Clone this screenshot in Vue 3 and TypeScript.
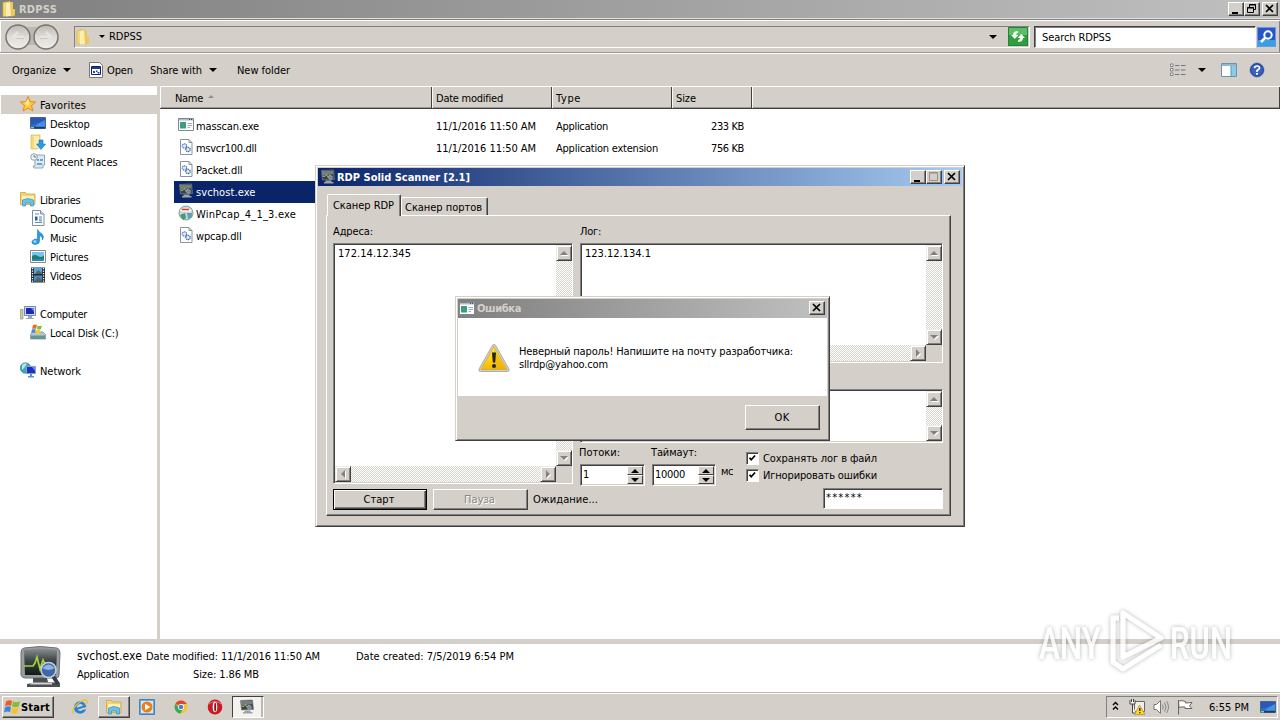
<script setup lang="ts">
interface Place { label: string; icon: string; level: number; w: number; active?: boolean }
interface FileRow { name: string; icon: string; w: number; selected?: boolean; date?: string; type?: string; typeW?: number; size?: string }

// Spreads the letters of a label so that it takes the given width in pixels.
const vFit = {
  mounted(el: HTMLElement, binding: { value: number }) {
    const range = document.createRange()
    range.selectNodeContents(el)
    const natural = range.getBoundingClientRect().width
    const count = (el.textContent || '').trim().length
    if (count > 0) el.style.letterSpacing = `${(binding.value - natural) / count}px`
  },
}

const icons: Record<string, string> = {
  folder: '<path d="M2 1.500 9 .5v14l-7 1z" fill="#f3d878" stroke="#d8b24c" stroke-width=".6"/><path d="M5 2.500l5-1.500v14l-5 .5z" fill="#fbeeb0"/><path d="M9 1h3v7h2v6.500l-4 1z" fill="#e9c75c"/>',
  open: '<path d="M1.500.5h10l3 3v12h-13z" fill="#fff" stroke="#777"/><path d="M3.500 4.500h9v8h-9z" fill="#fff" stroke="#0a246a"/><path d="M4 5h8v2H4z" fill="#1a3c9a"/><path d="M5 9h2v2H5zM8 8.500h1.500v1.500H8zM9.500 10h2v1.500h-2z" fill="#26409c"/>',
  star: '<path d="M8 .5 10.200 5.600 15.700 6 11.500 9.600 12.900 15 8 12 3.100 15 4.500 9.600.3 6l5.500-.4z" fill="#ffc93a" stroke="#e88a1c" stroke-width="1"/><path d="M8 3 9.300 7 8 10 5 7z" fill="#ffef9c"/>',
  desktop: '<path d="M.5 2.500h15v11H.5z" fill="#2c6fce" stroke="#4a6688"/><path d="M1 3h14v3L1 10z" fill="#2a58b8"/><path d="M7 9.500 15 5v6.500H6z" fill="#4690e4"/><path d="M1 12h14v1.500H1z" fill="#263a55"/><path d="M1 12h3v1.500H1z" fill="#7bd47b"/>',
  downloads: '<path d="M1 1h9v12l-3 2H1z" fill="#f4da80" stroke="#dcb75a" stroke-width=".7"/><path d="M4 2h5v12H4z" fill="#fbedb0"/><path d="M9 6h4v4h2.500L11 15.500 6.500 10H9z" fill="#2c9ade" stroke="#1b74bd" stroke-width=".6"/>',
  recent: '<path d="M5 2h9.500v10h-1.500v3H4l-1-2h2z" fill="#dfe9f1" stroke="#7c93a8" stroke-width=".8"/><circle cx="4" cy="4" r="3.300" fill="#eef4f8" stroke="#8a9aa8" stroke-width=".9"/><path d="M4 2v2h2" stroke="#456" fill="none" stroke-width=".8"/><path d="M7 6h2v2H7zM10 6h3v2h-3zM7 10h5v2H7z" fill="#6ea2c8"/>',
  libraries: '<path d="M.5 3V1.500h5l1 1.500H15v10.500H.5z" fill="#f1d674" stroke="#c9a645" stroke-width=".8"/><path d="M2 5h12v4H2z" fill="#fcf0b5"/><path d="M2.500 15V9Q8 6 13.500 9v6h-3v-3h-5v3z" fill="#6cc0e8" stroke="#3d8fc0" stroke-width=".7"/>',
  doc: '<path d="M2.500.5h8l3.500 3.500v11.500H2.500z" fill="#fff" stroke="#7b8fa5"/><path d="M10.500.5V4H14" fill="#d5e2ef" stroke="#7b8fa5"/><path d="M5 4h4M5 12.500h7" stroke="#6d8cb0"/><path d="M5 6.500h2.500v4H5z" fill="#2b5d9c"/><path d="M9 7h3M9 9h3M9 10.800h3" stroke="#5080b8"/>',
  music: '<path d="M7.500.5Q9 3.500 12 5q2.500 2.500.5 6Q13 7.500 9.500 6.500V12q0 3-4 3.500-4-.2-3.500-3 1-3 5.500-2.500z" fill="#2a9be2" stroke="#1a78c0" stroke-width=".6"/><circle cx="5" cy="12.500" r="1.500" fill="#8fdcff"/>',
  pictures: '<path d="M.5 2.500h15v12H.5z" fill="#fff" stroke="#888"/><path d="M2 4h12v9H2z" fill="#77c4ee"/><path d="M2 8q3-2 6 0t6-.5V11H2z" fill="#247c6c"/><path d="M2 11h12v2H2z" fill="#2c87b2"/>',
  videos: '<path d="M1 .5h14v15H1z" fill="#1d2b3c"/><path d="M4 1h8v6H4z" fill="#5ba3e0"/><path d="M4 8.500h8v6H4z" fill="#3f8ccc"/><path d="M5 7l3-4 4 3v1zM5 14l3-4 4 3v1z" fill="#6b5b40"/><path d="M2.500 1v14M13.500 1v14" stroke="#fff" stroke-width="1.300" stroke-dasharray="1.300 1.200"/>',
  computer: '<path d="M.5 4.500h2.500v9.500H.5z" fill="#c4cdb0" stroke="#8b9678" stroke-width=".7"/><path d="M4.500 1.500h11v9h-11z" fill="#d5daf0" stroke="#7a86b4"/><path d="M6 3h8v6H6z" fill="#1629b8"/><path d="M11 3h3v4z" fill="#6484ef"/><path d="M8 11h4v2h2v1H6v-1h2z" fill="#9aa4c6"/>',
  disk: '<path d="M3 8h10l2.500 2.500v4.500H.5v-4.500z" fill="#bac7cc" stroke="#72858f" stroke-width=".7"/><path d="M1 11.500h14V15H1z" fill="#67949b"/><path d="M3 1q2-1 4 0L6 5Q4 4 2 5z" fill="#ee6a2a"/><path d="M7.500 1.500q2 1 4.500 0L11 5q-2 1-4 0z" fill="#7cc142"/><path d="M2 5.500q2-1 3.800 0L5 9Q3 8 1 9z" fill="#3f8ee0"/><path d="M6.500 5.500q2 1 4 0L9.500 9q-2 1-4 0z" fill="#fcc828"/>',
  network: '<circle cx="5.500" cy="6" r="5.200" fill="#3fa6b8" stroke="#267a94" stroke-width=".7"/><path d="M2 3q3-3 5-1L4 6 2 8z" fill="#b5e8d0"/><path d="M6.500 4.500h9v7h-9z" fill="#1c30c4" stroke="#8c9ad8"/><path d="M12 5h3v4z" fill="#6b8cf0"/><path d="M10 12h2v2h2v1.500H8V14h2z" fill="#5e8cd0"/>',
  app: '<path d="M.5 1.500h15v12H.5z" fill="#fff" stroke="#7a8a96"/><path d="M1 2h14v1.500H1z" fill="#aebcc6"/><path d="M2 5h6v6.500H2z" fill="#3e9a80"/><path d="M9.500 6.500H14M9.500 8.500H14M9.500 10.500H12" stroke="#9ab"/><path d="M11 2.500h1M13 2.500h1" stroke="#345"/>',
  dll: '<path d="M2.500.5h8.500l3 3v12H2.500z" fill="#fff" stroke="#8a939c"/><path d="M11 .5V3.500h3" fill="none" stroke="#8a939c"/><circle cx="6.500" cy="7" r="2.200" fill="#dce9fa" stroke="#4a78b8" stroke-width="1.300" stroke-dasharray="1.200 .6"/><circle cx="10" cy="10.500" r="2.200" fill="#dce9fa" stroke="#35639f" stroke-width="1.300" stroke-dasharray="1.200 .6"/>',
  monitor: '<path d="M1.500 1.500 13.500 1l1 9.500-12 .5z" fill="#3a4244" stroke="#7d8485" stroke-width=".7"/><path d="M2 2h11l.5 3L2 7z" fill="#757d7d"/><path d="M2.500 7.500h2.500l1.500-2L8 8.500 9.500 6l1 1" fill="none" stroke="#a9bf62" stroke-width=".8"/><circle cx="10.500" cy="8.500" r="2" fill="#7088a8" stroke="#a4b0ba" stroke-width=".6"/><path d="M5.500 11.500h6v1.500h2v1.500H4V13h1.500z" fill="#9ea1a2"/>',
  pcap: '<circle cx="8" cy="8" r="7" fill="#c6d8d0" stroke="#899b96"/><path d="M2 5q6-4 12 0l-2 2H4z" fill="#f8eee7"/><path d="M4 4.500h7" stroke="#c84636" stroke-width="1.500"/><path d="M2 10l5-2 1 5-3 2z" fill="#3e9c76"/><path d="M9 8h5v4l-4 2z" fill="#5ba0c0"/>',
  flag: '<path d="M1 2.500Q4 .5 7 2L6 7Q3 5.500 0 7.500z" fill="#ef5a24"/><path d="M8 2.300q3 1.700 7 0L13.800 7.500Q10 9 7 7.300z" fill="#85be36"/><path d="M0 8.500Q3 6.500 6 8l-1 5Q2 12-1 13.500z" fill="#3587dd"/><path d="M7 8.500q3 1.500 6.500.2L12.300 14Q9 15.500 6 13.800z" fill="#fbc02a"/>',
  ie: '<g transform="rotate(-18 8 8)"><circle cx="8" cy="8.500" r="4.800" fill="none" stroke="#2583d5" stroke-width="2.800"/><path d="M4 8.800h9" stroke="#2583d5" stroke-width="1.900"/><path d="M10 10h5.500v1.700H10z" fill="#d4cfc8"/></g><path d="M1.500 14.800Q-1 10 6 4.500T15 2q.5 2-2 4" fill="none" stroke="#f0bd32" stroke-width="1.300"/>',
  media: '<path d="M.5.500h15v15H.5z" fill="#66aee3" stroke="#4182bc"/><path d="M2 2h12v12H2z" fill="#d5e7f4"/><circle cx="8" cy="8" r="5.500" fill="#ef7b16"/><path d="M6 4.800 11.500 8 6 11.200z" fill="#fff"/>',
  chrome: '<circle cx="8" cy="8" r="6.500" fill="#f5c72c"/><path d="M8 8 2.400 4.800A6.500 6.500 0 0 1 13.800 5H8z" fill="#e14634"/><path d="M2.400 4.800A6.500 6.500 0 0 0 7.500 14.500L10 9.500 6 9z" fill="#3ba757"/><circle cx="8" cy="8" r="3" fill="#fff"/><circle cx="8" cy="8" r="2.300" fill="#3e82e4"/>',
  opera: '<ellipse cx="8" cy="8" rx="7.300" ry="7.500" fill="#cc1824"/><path d="M2 5q6-5 12 0" stroke="#e97676" fill="none"/><ellipse cx="8" cy="8" rx="2.300" ry="5.200" fill="#fff"/><ellipse cx="8.200" cy="8" rx="1" ry="4.500" fill="#8f0e16"/>',
  views: '<path d="M.5 2h2.500v2.500H.5zM.5 6.500h2.500V9H.5zM.5 11h2.500v2.500H.5z" fill="#fff" stroke="#777" stroke-width=".9"/><path d="M5 3.500h4.500M11 3.500h4.500M5 8h4.500M11 8h4.500M5 12.500h4.500M11 12.500h4.500" stroke="#6d7783"/>',
  pane: '<path d="M.5 1.500h15v13H.5z" fill="#fff" stroke="#6b93ae"/><path d="M1 2h14v2H1z" fill="#8fb9d0"/><path d="M10 4h5v10h-5z" fill="#8ccbe8"/><path d="M10 4v10" stroke="#5597bb"/>',
  help: '<circle cx="8" cy="8" r="7.300" fill="#3a62bd" stroke="#a8b3cb"/><circle cx="8" cy="8" r="6.300" fill="none" stroke="#1c3d92"/><path d="M5.500 6.200Q5.700 4 8 4t2.500 2Q10.500 7.300 8 8.500V10" fill="none" stroke="#fff" stroke-width="1.700"/><path d="M7 11h2v1.700H7z" fill="#fff"/>',
  refresh: '<path d="M0 0h20v19H0z" fill="#2f9e40"/><path d="M0 0h20v8H0z" fill="#5fbd66"/><path d="M.5.500h19v18H.5z" fill="none" stroke="#23823a"/><path d="M3 8h2q0-4 5-4v2q-2 0-2 2h2.500l-3.800 4zM17 11h-2q0 4-5 4v-2q2 0 2-2H9.500l3.800-4z" fill="#f3fff0"/>',
  search: '<path d="M0 0h19v20H0z" fill="#2458c8"/><path d="M0 13h19v7H0z" fill="#399fe4"/><path d="M.5.500h18v19H.5z" fill="none" stroke="#6d96dc"/><circle cx="11" cy="8" r="3.700" fill="#2458c8" stroke="#fff" stroke-width="2"/><path d="M8.500 10.500 4 15" stroke="#fff" stroke-width="2.500"/>',
  lan: '<path d="M5.500 2.500h10v10h-10z" fill="#eee" stroke="#666"/><path d="M1 1v4h5V1M2.500 0v3M4.500 0v3M3.500 5v9h3" fill="#fff" stroke="#444"/><path d="M10.500 6 16 15.500H5.500z" fill="#ffd62c" stroke="#a08210" stroke-width=".6"/><path d="M10.800 9v3M10.800 13v1.300" stroke="#222" stroke-width="1.300"/>',
  sound: '<path d="M1 5.500h2.500L7.500 1.500v13L3.500 10.500H1z" fill="#fff" stroke="#777"/><path d="M9.500 5.500q1.500 2.500 0 5M11.500 3.500q3 4.500 0 9M13.500 2q4 6 0 12" fill="none" stroke="#888"/>',
  action: '<path d="M1.500 1v14.500M1.500 2Q5 1 8.500 2.500V4L15 3.500l-2.500 3.500L15 9.500H8V8Q5 7.500 2 8.500z" fill="#fff" stroke="#666"/>',
}

const places: Place[] = [
  { label: 'Favorites', icon: 'star', level: 0, w: 46, active: true },
  { label: 'Desktop', icon: 'desktop', level: 1, w: 39.500 },
  { label: 'Downloads', icon: 'downloads', level: 1, w: 52.500 },
  { label: 'Recent Places', icon: 'recent', level: 1, w: 67.500 },
  { label: '', icon: '', level: 0, w: 0 },
  { label: 'Libraries', icon: 'libraries', level: 0, w: 40.500 },
  { label: 'Documents', icon: 'doc', level: 1, w: 53.500 },
  { label: 'Music', icon: 'music', level: 1, w: 26.500 },
  { label: 'Pictures', icon: 'pictures', level: 1, w: 38.500 },
  { label: 'Videos', icon: 'videos', level: 1, w: 31.500 },
  { label: '', icon: '', level: 0, w: 0 },
  { label: 'Computer', icon: 'computer', level: 0, w: 47 },
  { label: 'Local Disk (C:)', icon: 'disk', level: 1, w: 68.500 },
  { label: '', icon: '', level: 0, w: 0 },
  { label: 'Network', icon: 'network', level: 0, w: 41 },
]
const files: FileRow[] = [
  { name: 'masscan.exe', icon: 'app', w: 63, date: '11/1/2016 11:50 AM', type: 'Application', typeW: 52, size: '233 KB' },
  { name: 'msvcr100.dll', icon: 'dll', w: 60.500, date: '11/1/2016 11:50 AM', type: 'Application extension', typeW: 102, size: '756 KB' },
  { name: 'Packet.dll', icon: 'dll', w: 46.500 },
  { name: 'svchost.exe', icon: 'monitor', w: 59.500, selected: true },
  { name: 'WinPcap_4_1_3.exe', icon: 'pcap', w: 100 },
  { name: 'wpcap.dll', icon: 'dll', w: 45.500 },
]
</script>

<template>
  <div class="desktop">
    <header class="title grey main-title">
      <svg class="ic" viewBox="0 0 16 16" v-html="icons.folder" />
      <b v-fit="38">RDPSS</b>
      <span class="spacer" />
      <span class="wb"><svg viewBox="0 0 16 14"><path d="M4 10h6v2H4z" /></svg></span>
      <span class="wb"><svg viewBox="0 0 16 14"><path d="M5.500 5V2.500h6v5H10M5 3h7" fill="none" stroke="#000" /><path d="M3.500 5.500h6v5h-6zM3 6h7" fill="none" stroke="#000" /></svg></span>
      <span class="wb gap"><svg viewBox="0 0 16 14"><path d="m4 3 7 7m0-7-7 7" stroke="#000" stroke-width="1.700" /></svg></span>
    </header>

    <div class="address">
      <svg class="nav" viewBox="0 0 56 28">
        <defs><linearGradient id="navg" x2="0" y2="1"><stop stop-color="#bdbab6" /><stop offset=".5" stop-color="#dfdcd8" /><stop offset="1" stop-color="#efeeec" /></linearGradient></defs>
        <path d="M10 4h34v18H10z" fill="#bbb8b4" />
        <circle cx="14" cy="14" r="12" fill="url(#navg)" stroke="#77756f" stroke-width="1.500" />
        <circle cx="42" cy="14" r="12" fill="url(#navg)" stroke="#77756f" stroke-width="1.500" />
        <path d="M20 14H9m5-5-5 5 5 5M36 14h11m-5-5 5 5-5 5" fill="none" stroke="#e6e4e1" stroke-width="2.500" />
        <path d="M20 15.500h-8M36 15.500h8" stroke="#ccc9c4" />
      </svg>
      <div class="path">
        <svg class="ic" viewBox="0 0 16 16" v-html="icons.folder" />
        <i class="down small" />
        <span v-fit="33">RDPSS</span>
        <span class="spacer" />
        <i class="down" />
        <svg class="go" viewBox="0 0 20 19" v-html="icons.refresh" />
      </div>
      <div class="search"><span v-fit="69">Search RDPSS</span></div>
      <svg class="find" viewBox="0 0 19 20" v-html="icons.search" />
    </div>

    <div class="tools">
      <span v-fit="44">Organize</span><i class="down t1" />
      <svg class="ic t2" viewBox="0 0 16 16" v-html="icons.open" /><span v-fit="26">Open</span>
      <span class="t3" v-fit="52">Share with</span><i class="down t1" />
      <span class="t4" v-fit="53">New folder</span>
      <span class="spacer" />
      <svg class="ic" viewBox="0 0 16 16" v-html="icons.views" /><i class="down t5" />
      <svg class="ic t6" viewBox="0 0 16 16" v-html="icons.pane" />
      <svg class="ic t7" viewBox="0 0 16 16" v-html="icons.help" />
    </div>

    <main class="body">
      <nav class="side">
        <div v-for="(p, i) in places" :key="i" class="place" :class="{ sub: p.level === 1, on: p.active }">
          <template v-if="p.label">
            <svg class="ic" viewBox="0 0 16 16" v-html="icons[p.icon]" />
            <span v-fit="p.w">{{ p.label }}</span>
          </template>
        </div>
      </nav>
      <section class="list">
        <div class="cols">
          <div class="c1"><span v-fit="28">Name</span><i class="sort" /></div>
          <div class="c2"><span v-fit="67">Date modified</span></div>
          <div class="c3"><span v-fit="25">Type</span></div>
          <div class="c4"><span v-fit="20">Size</span></div>
          <div class="c5" />
        </div>
        <div class="rows">
          <div v-for="f in files" :key="f.name" class="file" :class="{ sel: f.selected }">
            <div class="n"><svg class="ic" viewBox="0 0 16 16" v-html="icons[f.icon]" /><span v-fit="f.w">{{ f.name }}</span></div>
            <template v-if="f.date">
              <div class="d"><span v-fit="100">{{ f.date }}</span></div>
              <div class="y"><span v-fit="f.typeW">{{ f.type }}</span></div>
              <div class="s"><span v-fit="33">{{ f.size }}</span></div>
            </template>
          </div>
        </div>
      </section>
    </main>

    <footer class="details">
      <svg class="big" viewBox="0 0 42 42">
        <defs><linearGradient id="scr" x2="0" y2="1"><stop stop-color="#8b9092" /><stop offset=".45" stop-color="#3d4546" /><stop offset="1" stop-color="#111a18" /></linearGradient></defs>
        <path d="M4 2Q20-1 37 2q3 1 3 5l-1 22q0 3-3 3H5q-3 0-4-3L1 6q0-3 3-4z" fill="#9a9d9f" stroke="#6f7274" />
        <path d="M4 4Q20 1 37 4L36 29H5z" fill="url(#scr)" />
        <path d="M4 20h9l2-3 2-6 3 12 3-9 3 6h4" fill="none" stroke="#a2d337" stroke-width="1.700" />
        <path d="M13 32h14l1 4 12 1v4H7v-3l6-1z" fill="#4c4f50" /><path d="M12 36.500h20v2H10z" fill="#d0d2d4" />
        <path d="m33 30 5 8" stroke="#333c48" stroke-width="4" />
        <circle cx="28.500" cy="24" r="7.500" fill="#3e68a8" stroke="#c1ccd8" stroke-width="1.700" />
        <path d="M22.500 22q6-7 12 0-6 4-12 0z" fill="#8fb4e0" />
      </svg>
      <div class="info">
        <div><span class="fn" v-fit="65">svchost.exe</span><span class="dm" v-fit="174">Date modified: 11/1/2016 11:50 AM</span><span class="dc" v-fit="158">Date created: 7/5/2019 6:54 PM</span></div>
        <div><span class="ty" v-fit="52">Application</span><span class="sz" v-fit="66">Size: 1.86 MB</span></div>
      </div>
    </footer>

    <footer class="taskbar">
      <div class="start"><svg class="ic" viewBox="-1 0 17 16" v-html="icons.flag" /><b v-fit="29">Start</b></div>
      <div class="task"><svg class="ic" viewBox="0 0 16 16" v-html="icons.ie" /></div>
      <div class="task raised"><svg class="ic" viewBox="0 0 16 16" v-html="icons.libraries" /></div>
      <div class="task"><svg class="ic" viewBox="0 0 16 16" v-html="icons.media" /></div>
      <div class="task"><svg class="ic" viewBox="0 0 16 16" v-html="icons.chrome" /></div>
      <div class="task"><svg class="ic" viewBox="0 0 16 16" v-html="icons.opera" /></div>
      <div class="task pressed"><svg class="ic" viewBox="0 0 16 16" v-html="icons.monitor" /></div>
      <span class="spacer" />
      <div class="tray">
        <svg class="chev" viewBox="0 0 8 10"><path d="m1 4 2.500-2.500L6 4M1 8.500 3.500 6 6 8.500" fill="none" stroke="#000" stroke-width="1.400" /></svg>
        <svg class="ic" viewBox="0 0 16 16" v-html="icons.lan" />
        <svg class="ic" viewBox="0 0 16 16" v-html="icons.sound" />
        <svg class="ic" viewBox="0 0 16 16" v-html="icons.action" />
        <span class="clock" v-fit="40">6:55 PM</span>
        <svg class="ic" viewBox="0 0 16 16" v-html="icons.desktop" />
      </div>
    </footer>

    <section class="window scanner">
      <div class="title blue">
        <svg class="ic" viewBox="0 0 16 16" v-html="icons.monitor" />
        <b v-fit="133">RDP Solid Scanner [2.1]</b>
        <span class="spacer" />
        <span class="wb"><svg viewBox="0 0 16 14"><path d="M4 10h6v2H4z" /></svg></span>
        <span class="wb"><svg viewBox="0 0 16 14"><path d="M3.500 2.500h8v8h-8z" fill="none" stroke="#999083" /><path d="M3 3h9" stroke="#999083" /></svg></span>
        <span class="wb gap"><svg viewBox="0 0 16 14"><path d="m4 3 7 7m0-7-7 7" stroke="#000" stroke-width="1.700" /></svg></span>
      </div>
      <div class="tabs"><div class="tab on"><span v-fit="61">Сканер RDP</span></div><div class="tab"><span v-fit="77">Сканер портов</span></div></div>
      <div class="panel">
        <div class="left">
          <label><span v-fit="40">Адреса:</span></label>
          <div class="area a1">
            <div class="txt"><span v-fit="73">172.14.12.345</span></div>
            <div class="sb v"><i class="bt up" /><i class="bt dn" /></div>
            <div class="sb h"><i class="bt lf" /><i class="bt rt" /></div>
          </div>
          <div class="buttons">
            <div class="btn def"><span v-fit="31">Старт</span></div>
            <div class="btn off"><span v-fit="31">Пауза</span></div>
          </div>
        </div>
        <div class="right">
          <label><span v-fit="21">Лог:</span></label>
          <div class="area a2">
            <div class="txt"><span v-fit="66">123.12.134.1</span></div>
            <div class="sb v"><i class="bt up" /><i class="bt dn" /></div>
            <div class="sb h"><i class="bt lf" /><i class="bt rt" /></div>
          </div>
          <div class="area a3">
            <div class="txt" />
            <div class="sb v"><i class="bt up" /><i class="bt dn" /></div>
          </div>
          <div class="opts">
            <div class="num n1"><span v-fit="41">Потоки:</span><div class="spin"><span>1</span><i><em class="su" /><em class="sd" /></i></div></div>
            <div class="num n2"><span v-fit="46">Таймаут:</span><div class="spin"><span v-fit="30">10000</span><i><em class="su" /><em class="sd" /></i></div></div>
            <span class="ms" v-fit="12">мс</span>
            <div class="checks">
              <div><svg viewBox="0 0 13 13"><path d="M3 5.500 5 8l4.500-5" fill="none" stroke="#000" stroke-width="2" /></svg><span v-fit="114">Сохранять лог в файл</span></div>
              <div><svg viewBox="0 0 13 13"><path d="M3 5.500 5 8l4.500-5" fill="none" stroke="#000" stroke-width="2" /></svg><span v-fit="114">Игнорировать ошибки</span></div>
            </div>
          </div>
          <div class="status"><span v-fit="65">Ожидание...</span><div class="pass"><span v-fit="37">******</span></div></div>
        </div>
      </div>
    </section>

    <section class="window error">
      <div class="title grey">
        <svg class="ic" viewBox="0 0 16 16" v-html="icons.app" />
        <b v-fit="44">Ошибка</b>
        <span class="spacer" />
        <span class="wb"><svg viewBox="0 0 16 14"><path d="m4 3 7 7m0-7-7 7" stroke="#000" stroke-width="1.700" /></svg></span>
      </div>
      <div class="msg">
        <svg class="warn" viewBox="0 0 32 30">
          <defs><linearGradient id="wg" x2="0" y2="1"><stop stop-color="#ffe45c" /><stop offset=".6" stop-color="#fdd013" /><stop offset="1" stop-color="#f3b90c" /></linearGradient></defs>
          <path d="M14.300 2.500q1.700-2.500 3.400 0L31 26q.8 2.500-1.500 2.500h-27Q.2 28.500 1 26z" fill="#d0cfcb" stroke="#a1a09c" stroke-width=".8" />
          <path d="M16 3.500 29 26.500H3z" fill="url(#wg)" stroke="#dba211" stroke-width=".7" /><path d="M16 5v21h11z" fill="#e0a50c" opacity=".4" />
          <path d="M14 9.500h4l-.8 10h-2.400z" fill="#222" /><circle cx="16" cy="23" r="2" fill="#222" />
        </svg>
        <p><span v-fit="274">Неверный пароль! Напишите на почту разработчика:</span><br><span v-fit="89">sllrdp@yahoo.com</span></p>
      </div>
      <div class="foot"><div class="btn"><span v-fit="15">OK</span></div></div>
    </section>

    <svg class="mark" viewBox="0 0 250 80">
      <defs><filter id="sh" x="-10%" y="-20%" width="120%" height="140%"><feDropShadow dx="0" dy="0" stdDeviation="1.900" flood-color="#666" flood-opacity=".65" /></filter></defs>
      <g filter="url(#sh)" opacity=".78">
        <text x="11" y="56" textLength="62" lengthAdjust="spacingAndGlyphs">ANY</text>
        <text x="142" y="56" textLength="62" lengthAdjust="spacingAndGlyphs">RUN</text>
        <path d="M91 15h-6v44l10 7 38-24" fill="none" stroke="#fff" stroke-width="5" stroke-linejoin="round" />
        <path d="M95 10v44l38-19z" fill="none" stroke="#fff" stroke-width="5" stroke-linejoin="round" />
      </g>
    </svg>
  </div>
</template>

<style>
html, body { margin: 0; overflow: hidden; }
</style>

<style scoped>
* { box-sizing: border-box; }
.desktop { position: relative; width: 1280px; height: 720px; display: flex; flex-direction: column; overflow: hidden; background: #d4cfc8; color: #000; font: 11px/13px "DejaVu Sans Condensed", "DejaVu Sans", sans-serif; font-stretch: condensed; white-space: nowrap; }
.spacer { flex: 1; }
.ic { width: 16px; height: 16px; flex: none; display: block; }
.down { width: 0; height: 0; border: 4px solid transparent; border-top-color: #000; border-bottom: 0; flex: none; }
.down.small { border-width: 3px; border-bottom: 0; }

.title { height: 18px; display: flex; align-items: center; flex: none; }
.title b { margin-left: 2px; }
.grey { background: linear-gradient(90deg, #808080, #c0c0c0); color: #d4d0c8; }
.blue { background: linear-gradient(90deg, #0a246a, #a6caf0); color: #fff; }
.main-title { padding: 0 2px 0 1px; }
.wb { width: 16px; height: 14px; background: #d4cfc8; border: 1px solid; border-color: #fff #404040 #404040 #fff; box-shadow: inset -1px -1px #808080; margin-top: -1px; flex: none; }
.wb svg { display: block; width: 16px; height: 14px; margin: -1px; }
.wb.gap { margin-left: 2px; }

.address { height: 36px; display: flex; align-items: center; border-top: 1px solid #e4e1dd; border-bottom: 1px solid #fff; box-shadow: inset 0 1px #808080, inset 0 2px #fff, inset 0 -1px #999, inset 1px 0 #fff, inset -1px 0 #808080; padding-left: 4px; flex: none; }
.nav { width: 56px; height: 28px; margin-top: 2px; flex: none; }
.path { width: 956px; height: 22px; margin-left: 14px; margin-top: 1px; display: flex; align-items: center; border: 1px solid; border-color: #808080 #fff #fff #808080; }
.path .small { margin: 0 4px 0 8px; }
.path .go { width: 20px; height: 19px; margin-left: 11px; flex: none; margin-right: 1px; }
.search { width: 222px; height: 22px; margin: 1px 0 0 4px; background: #fff; border: 1px solid; border-color: #404040 #fff #fff #404040; box-shadow: inset 1px 1px #808080; display: flex; align-items: center; padding: 1px 0 0 7px; }
.find { width: 19px; height: 20px; margin: 1px 0 0 1px; flex: none; }

.tools { height: 32px; display: flex; align-items: center; padding: 0 15px 0 12px; flex: none; }
.t1 { margin-left: 7px; }
.t2 { margin: 0 3px 0 17px; }
.t3 { margin-left: 17px; }
.t4 { margin-left: 20px; }
.t5 { margin-left: 12px; }
.t6 { margin-left: 15px; }
.t7 { margin-left: 12px; }

.body { height: 553px; display: flex; flex: none; }
.side { width: 160px; background: #fff; border-right: 3px solid #d4cfc8; padding-top: 9px; }
.place { height: 19px; display: flex; align-items: center; padding-left: 20px; gap: 4px; }
.place span { padding-top: 2px; }
.place .ic { margin-top: -1px; }
.place.sub { padding-left: 30px; }
.place.on { background: #d4cfc8; margin-left: 1px; padding-left: 19px; }
.list { flex: 1; background: #fff; }
.cols { height: 23px; display: flex; background: #d4cfc8; border-top: 1px solid #fff; border-bottom: 1px solid #404040; box-shadow: inset 0 -1px #808080; }
.cols div { display: flex; align-items: center; padding: 2px 0 0 3px; border-left: 1px solid #fff; border-right: 1px solid #404040; box-shadow: inset 0 -1px #999; }
.cols .c1 { width: 272px; padding-left: 14px; }
.cols .c2, .cols .c3 { width: 120px; }
.cols .c4 { width: 80px; }
.cols .c5 { flex: 1; }
.sort { border: 3px solid transparent; border-top: 0; border-bottom-color: #949089; margin: -5px 0 0 5px; }
.rows { padding: 6px 0 0 14px; }
.file { height: 22px; display: flex; align-items: center; }
.file.sel { background: #0a246a; color: #fff; width: 200px; }
.n { width: 262px; display: flex; align-items: center; gap: 2px; padding-left: 4px; }
.n .ic { margin-top: -2px; }
.d { width: 120px; }
.y { width: 120px; }
.s { width: 68px; text-align: right; }

.details { height: 54px; border-top: 5px solid #d4cfc8; border-bottom: 1px solid #b9b5af; background: #fff; display: flex; padding: 2px 0 0 20px; flex: none; }
.big { width: 42px; height: 42px; flex: none; }
.info { margin-left: 15px; padding-top: 1px; }
.info > div { height: 18px; display: flex; align-items: center; }
.fn { font-size: 12px; }
.dm { margin-left: 4px; }
.dc { margin-left: 36px; }
.sz { margin-left: 64px; }

.taskbar { height: 27px; display: flex; align-items: flex-start; border-top: 1px solid #fff; padding: 2px 2px 0; flex: none; }
.start { width: 52px; height: 22px; border: 1px solid; border-color: #fff #404040 #404040 #fff; box-shadow: inset -1px -1px #808080; display: flex; align-items: center; padding-left: 1px; margin-right: 10px; }
.start .ic { width: 17px; }
.start b { margin-left: 0; }
.task { width: 32px; height: 22px; margin-right: 1.700px; display: flex; align-items: center; justify-content: center; }
.raised { border: 1px solid; border-color: #fff #404040 #404040 #fff; box-shadow: inset -1px -1px #808080; }
.pressed { border: 1px solid; border-color: #404040 #fff #fff #404040; background: #f4f2f0; box-shadow: inset -2px 0 #bbb7b1; padding-right: 2px; }
.tray { width: 172px; height: 22px; border: 1px solid; border-color: #808080 #fff #fff #808080; display: flex; align-items: center; gap: 8px; padding-left: 5px; }
.chev { width: 8px; height: 10px; margin-right: 1px; margin-top: -2px; }
.clock { margin: 0 3px 0 8px; flex: none; }

.window { position: absolute; background: #d4cfc8; border: 1px solid; border-color: #d4cfc8 #404040 #404040 #d4cfc8; box-shadow: inset 1px 1px #fff, inset -1px -1px #808080; padding: 2px; }
.scanner { left: 315px; top: 165px; width: 650px; height: 362px; }
.scanner > .title { padding: 0 2px 0 2px; }
.scanner > .title b { margin-left: 1px; }
.tabs { display: flex; align-items: flex-end; height: 29px; padding-left: 9px; }
.tab { height: 18px; width: 87px; border: solid; border-width: 1px 1px 0; border-color: #fff #404040 #fff #fff; box-shadow: inset -1px 0 #808080; border-radius: 2px 2px 0 0; padding: 3px 0 0 3px; }
.tab.on { width: 74px; padding: 4px 0 0 5px; z-index: 1; margin-bottom: -1px; height: 22px; background: #d4cfc8; }
.panel { margin: 0 11px 0 8px; height: 301px; border: 1px solid; border-color: #fff #404040 #404040 #fff; box-shadow: inset -1px -1px #808080; display: flex; padding: 8px 6px 0 6px; }
.panel label { display: block; height: 19px; padding-top: 1px; }
.left { width: 240px; }
.right { width: 363px; margin-left: 7px; }
.area { background: #fff; border: 1px solid; border-color: #808080 #fff #fff #808080; box-shadow: inset 1px 1px #404040, inset -1px -1px #d4cfc8; display: grid; grid-template-columns: 1fr 16px; grid-template-rows: 1fr 16px; padding: 1px 0 1px 1px; }
.area::after { content: ""; background: #d4cfc8; grid-column: 2; grid-row: 2; }
.a1 { height: 241px; }
.a2 { height: 120px; }
.a3 { height: 54px; margin-top: 26px; grid-template-rows: 1fr; }
.a3::after { display: none; }
.txt { padding: 2px 0 0 3px; }
.sb { display: flex; justify-content: space-between; background: repeating-conic-gradient(#fff 0 25%, #d8d4ce 0 50%) 0 0 / 2px 2px; }
.sb.v { flex-direction: column; }
.sb.h { grid-row: 2; grid-column: 1; }
.bt { width: 16px; height: 16px; background: #d4cfc8; border: 1px solid; border-color: #eeece9 #404040 #404040 #eeece9; box-shadow: inset 1px 1px #fff, inset -1px -1px #808080; display: flex; align-items: center; justify-content: center; }
.bt::before { content: ""; border: 4px solid transparent; filter: drop-shadow(1px 1px #fff); }
.up::before { border-top: 0; border-bottom-color: #808080; }
.dn::before { border-bottom: 0; border-top-color: #808080; }
.lf::before { border-left: 0; border-right-color: #808080; }
.rt::before { border-right: 0; border-left-color: #808080; }
.btn { height: 21px; width: 95px; border: 1px solid; border-color: #fff #404040 #404040 #fff; box-shadow: inset -1px -1px #808080; display: flex; align-items: center; justify-content: center; flex: none; }
.buttons { display: flex; gap: 6px; margin-top: 5px; }
.btn.def { width: 94px; border-color: #000; box-shadow: inset 1px 1px #fff, inset -1px -1px #404040, inset -2px -2px #808080; padding-right: 2px; }
.btn.off { color: #8b8781; text-shadow: 1px 1px #fff; padding-right: 2px; }
.opts { display: flex; height: 44px; }
.num { padding-top: 3px; }
.num > span { display: block; height: 18px; margin-left: -1px; }
.n1 { width: 72px; }
.n2 { width: 69px; }
.spin { width: 65px; height: 22px; background: #fff; border: 1px solid; border-color: #808080 #fff #fff #808080; box-shadow: inset 1px 1px #404040, inset -1px -1px #d4cfc8; display: flex; justify-content: space-between; align-items: center; padding: 2px 1px 2px 2px; }
.spin > span { margin-top: -1px; }
.n2 .spin { width: 64px; }
.spin i { width: 16px; height: 18px; display: flex; flex-direction: column; }
.spin em { flex: 1; display: flex; align-items: center; justify-content: center; background: #d4cfc8; border: 1px solid; border-color: #fff #404040 #404040 #fff; }
.spin em::before { content: ""; border: 4px solid transparent; }
.su::before { border-top: 0 !important; border-bottom-color: #000 !important; }
.sd::before { border-bottom: 0 !important; border-top-color: #000 !important; }
.ms { padding-top: 22px; width: 25px; }
.checks { padding-top: 7px; }
.checks > div { height: 17px; display: flex; align-items: center; gap: 4px; }
.checks svg { width: 13px; height: 13px; background: #fff; border: 1px solid; border-color: #808080 #fff #fff #808080; box-shadow: inset 1px 1px #404040; flex: none; }
.status { display: flex; justify-content: space-between; height: 22px; margin-left: -47px; }
.status > span { padding-top: 6px; }
.pass { width: 120px; height: 21px; margin-top: 1px; background: #fff; border: 1px solid; border-color: #808080 #fff #fff #808080; box-shadow: inset 1px 1px #404040; padding: 2px; }

.error { left: 455px; top: 296px; width: 375px; height: 145px; }
.error .title { height: 19px; padding: 0 2px 0 1px; }
.msg { height: 78px; background: #fff; display: flex; padding: 25px 0 0 20px; }
.warn { width: 32px; height: 30px; flex: none; }
.msg p { margin: 2px 0 0 9px; line-height: 13px; }
.foot { display: flex; justify-content: flex-end; padding: 9px 7px 0 0; }
.foot .btn { width: 75px; height: 25px; padding-right: 1px; }

.mark { position: absolute; left: 1028px; top: 603px; width: 250px; height: 80px; }
.mark text { font: 500 44px Roboto, sans-serif; fill: #fff; }
</style>
